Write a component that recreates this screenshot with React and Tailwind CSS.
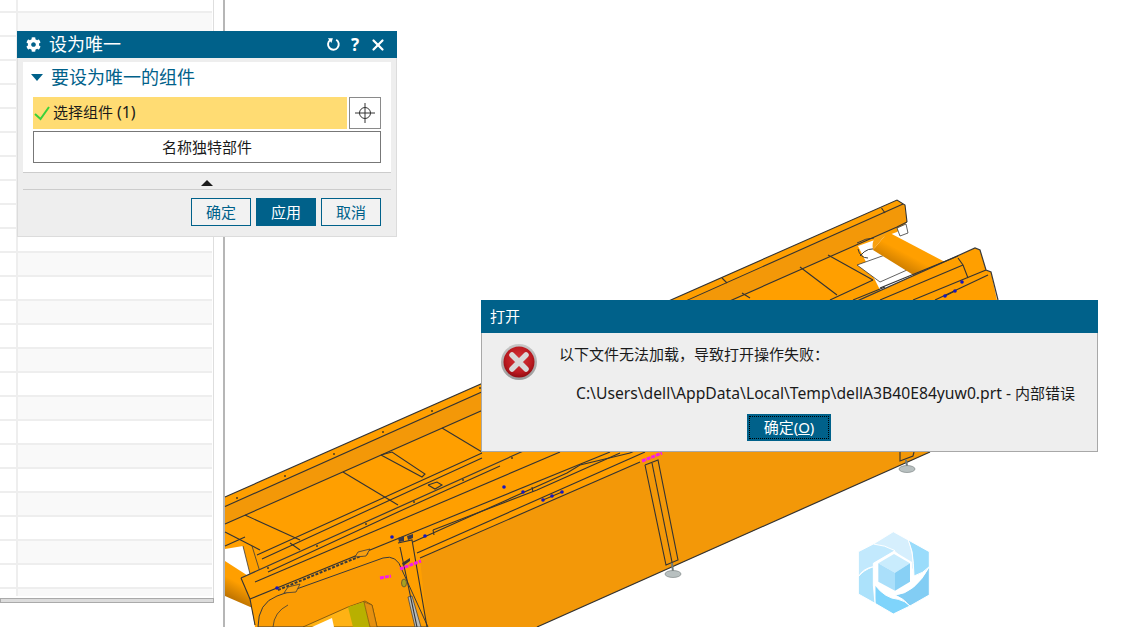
import React from 'react'
import { FaCog } from 'react-icons/fa'
import { X } from 'lucide-react'

const rows = Array.from({ length: 25 }, (_, i) => i)

// CAD model line work, in page coordinates
const modelLines = [
  // far rail
  '225,497 897,200 905,205 907,222',
  '225,506.5 903,204',
  '225,524 897,227 907,222',
  '881.5,208 885,213',
  '722,278 727,283',
  // deck panels
  '343,472 398,505',
  '442,428 482,452',
  '800,267 837,295',
  '828,255 873,280',
  '742,293 750,298',
  '245,515 300,540',
  '225,532 260,550',
  '225,546 245,537',
  '290,543 300,550',
  '257,555 383,498 482,453',
  '262,559 388,501 482,458',
  '873,280 830,300',
  '885,287 853,300',
  '268,572 398,512 500,466',
  // slot and tab
  '381,455 422,477 425,474 392,452 381,455',
  '428,485 437,482 442,485 435,489 428,485',
  // near rail
  '255,582 560,452',
  '250,599 610,452',
  '241,578 250,599',
  '250,599 255,625',
  '413,542 567,473 580,465 630,453',
  '433,530 537,490 620,453',
  '417,553 645,452',
  '420,558 640,462',
  '630,453 650,444',
  '880,300 963,265',
  '913,300 986,270',
  '935,300 988,275',
  '880,288 958,256',
  '958,258 963,265 968,278',
  '945,296 955,291',
  '543,500 562,492',
  // near strut
  '398,543 412,540 427,627',
  '400,547 417,627',
  '532,487 533,492',
  '433,530 434,535',
  // struts on the side panel
  '645,465 658,460 678,560 666,565 645,465',
  '652,463 672,562',
  '900,452 900,461 913,456 914,452',
]

const blueDots = [
  [504, 487], [523, 492], [543, 500], [552, 496], [562, 492],
  [425, 536], [392, 537], [277, 588], [962, 282], [945, 296], [955, 291],
]

const rivets = [
  [237, 498], [285, 476], [334, 454], [383, 432], [432, 411], [480, 388],
  [268, 568], [317, 546], [366, 524], [414, 502], [463, 480], [512, 458],
]

const pinkMarks = ['380,578 391,576', '400,569 421,561', '642,461 662,453']

const CadModel = () => (
  <svg className="absolute left-0 top-0" width="1141" height="627" viewBox="0 0 1141 627">
    <defs>
      <linearGradient id="farTube" gradientUnits="userSpaceOnUse" x1="893" y1="235" x2="877" y2="265">
        <stop offset="0.3" stopColor="#ff9f00" />
        <stop offset="1" stopColor="#b46c00" />
      </linearGradient>
      <linearGradient id="nearTube" gradientUnits="userSpaceOnUse" x1="245" y1="572" x2="228" y2="604">
        <stop offset="0.35" stopColor="#ff9f00" />
        <stop offset="1" stopColor="#a86400" />
      </linearGradient>
    </defs>

    {/* lower left tube */}
    <polygon points="225,561 262,585 262,612 225,596" fill="url(#nearTube)" />

    {/* deck */}
    <polygon points="225,497 897,200 905,205 907,222 897,232 858,246 885,300 260,570 250,574 243,546 225,549" fill="#ff9f00" />
    <polygon points="225,506.5 903,204 907,222 897,227 225,524" fill="#f39808" />
    <polygon points="857,265 885,255 907,270 880,282" fill="#ffffff" stroke="#3a3a3a" strokeWidth="0.8" />
    <polygon points="897,228 906,224 908,233 900,236" fill="#ffffff" stroke="#3a3a3a" strokeWidth="0.8" />
    <path d="M857 243 Q866 238 874 238 M858 249 Q860 258 868 258 M860 256 Q868 246 878 250" fill="none" stroke="#3a3a3a" strokeWidth="1" />
    <path d="M243 546 L250 574 M252 546 L260 572" fill="none" stroke="#3a3a3a" strokeWidth="0.8" />

    {/* far tube */}
    <polygon points="888,232 945,262 915,276 873,250" fill="url(#farTube)" />
    <path d="M888 232 Q870 234 873 250" fill="#f8a010" />

    {/* near rail and side panel */}
    <polygon points="241,578 975,248 980,250 986,270 991,272 998,305 930,452 537,627 427,627 255,627 250,599" fill="#ff9f00" />
    <polygon points="420,558 640,462 990,310 1000,400 930,452 537,627 427,627" fill="#f39808" />
    <polyline points="241,578 975,248 980,250 986,270 991,272 998,300" fill="none" stroke="#3a3a3a" strokeWidth="1.2" />
    <polyline points="537,627 930,452" fill="none" stroke="#333333" strokeWidth="1.2" />

    {/* end panel with its window */}
    <path d="M258 627 Q258 603 277 596 L383 558 Q397 554 402 570 L428 627 Z" fill="#fb9c04" stroke="#3a3a3a" strokeWidth="1" />
    <path d="M273 627 Q274 612 288 605" fill="none" stroke="#3a3a3a" strokeWidth="0.8" />
    <path d="M303 627 L348 607 L365 601 L372 605 L377 627 Z" fill="#ffb214" stroke="#6a4a10" strokeWidth="0.8" />
    <path d="M348 607 L364 602 L370 627 L353 627 Z" fill="#b8b000" />
    <path d="M364 602 L372 605 L377 627 L370 627 Z" fill="#e69010" stroke="#6a4a10" strokeWidth="0.6" />
    <path d="M312 627 L332 618 L334 627 Z" fill="#ffffff" />
    <polygon points="408,597 412,596 421,627 415,627" fill="#b8bcbc" stroke="#3a3a3a" strokeWidth="0.7" />

    {modelLines.map((pts) => (
      <polyline key={pts} points={pts} fill="none" stroke="#333333" strokeWidth="1.1" />
    ))}
    <polyline points="278,590 368,553" fill="none" stroke="#3a3a3a" strokeWidth="2" strokeDasharray="3 1.5" />
    <polygon points="288,587 300,584 296,592 284,593" fill="#f8a010" stroke="#3a3a3a" strokeWidth="0.8" />
    <polygon points="358,552 370,549 366,556 355,557" fill="#f8a010" stroke="#3a3a3a" strokeWidth="0.8" />
    <polygon points="398,538 404,536 404,541 399,542" fill="#3a3a4a" />
    <polygon points="407,536 413,534 413,538 408,540" fill="#3a3a4a" />
    <polygon points="402,563 410,558 410,561 403,566" fill="#3a3a3a" />
    <ellipse cx="404" cy="583" rx="2.5" ry="4" fill="#a8a020" stroke="#3a3a3a" strokeWidth="0.6" />

    {rivets.map(([cx, cy]) => (
      <circle key={`${cx}-${cy}`} cx={cx} cy={cy} r="1" fill="#4a3a20" />
    ))}
    {blueDots.map(([cx, cy]) => (
      <circle key={`${cx}-${cy}`} cx={cx} cy={cy} r="1.8" fill="#1616c0" />
    ))}
    {pinkMarks.map((pts) => (
      <polyline key={pts} points={pts} fill="none" stroke="#f51ee6" strokeWidth="3" strokeDasharray="4 1" />
    ))}

    {/* feet */}
    <line x1="672" y1="563" x2="673" y2="572" stroke="#6f7a7a" strokeWidth="2" />
    <ellipse cx="673" cy="574" rx="8" ry="3.5" fill="#b8c0c0" stroke="#707878" strokeWidth="0.6" />
    <line x1="906" y1="460" x2="907" y2="466" stroke="#6f7a7a" strokeWidth="2" />
    <ellipse cx="907" cy="469" rx="8" ry="3.5" fill="#b8c0c0" stroke="#707878" strokeWidth="0.6" />

    {/* watermark logo */}
    <g transform="translate(840 520) scale(0.3333)" stroke="#ffffff" strokeWidth="3">
      <path d="M160 35 L205 60 Q222 100 220 150 L190 118 L162 92 Q130 80 100 72 Z" fill="#d6effd" />
      <path d="M205 60 L268 95 L268 140 Q250 160 222 168 L220 130 Q220 95 205 60 Z" fill="#9adcfb" />
      <path d="M268 140 L268 225 L210 258 Q190 235 165 225 Q225 220 268 140 Z" fill="#82cdf4" />
      <path d="M210 258 L160 282 L105 250 L105 195 Q135 235 175 238 Q195 242 210 258 Z" fill="#7fd4fb" />
      <path d="M55 170 Q70 150 100 140 L100 195 L105 250 L55 222 Z" fill="#ace2fb" />
      <path d="M55 95 L100 72 Q135 75 165 92 L100 130 L100 140 Q70 145 55 170 Z" fill="#c2e9fd" />
      <polygon points="162,94 216,126 216,188 165,218 107,188 107,126" fill="#ffffff" strokeWidth="0" />
      <path d="M162 102 L210 130 L165 158 L115 130 Z" fill="#c9ecfd" strokeWidth="0" />
      <path d="M115 130 L165 158 L165 212 L115 185 Z" fill="#aadffa" strokeWidth="0" />
      <path d="M210 130 L210 185 L165 212 L165 158 Z" fill="#88d0f5" strokeWidth="0" />
    </g>
  </svg>
)

const ErrorIcon = () => (
  <svg width="38" height="38" viewBox="0 0 38 38" className="shrink-0">
    <defs>
      <radialGradient id="errRed" cx="50%" cy="42%" r="60%">
        <stop offset="0" stopColor="#d8353a" />
        <stop offset="0.7" stopColor="#ba1a20" />
        <stop offset="1" stopColor="#8e0a10" />
      </radialGradient>
      <linearGradient id="errRing" x1="0" y1="0" x2="0" y2="1">
        <stop offset="0" stopColor="#c8c8c8" />
        <stop offset="1" stopColor="#9a9a9a" />
      </linearGradient>
    </defs>
    <circle cx="19" cy="19" r="18" fill="url(#errRing)" />
    <circle cx="19" cy="19" r="15.5" fill="url(#errRed)" />
    <path d="M12 12 L26 26 M26 12 L12 26" stroke="#d9d9d9" strokeWidth="5.5" strokeLinecap="round" />
  </svg>
)

const DialogButton = ({ children, primary }) => (
  <button
    className={
      primary
        ? 'w-[60px] h-[28px] bg-[#00618a] text-white text-[15px]'
        : 'w-[60px] h-[28px] border border-[#00618a] text-[#00618a] text-[15px] bg-[#f2f2f2]'
    }
  >
    {children}
  </button>
)

const MakeUniqueDialog = () => (
  <div className="absolute left-[17px] top-[31px] w-[380px] h-[206px] bg-[#eeeeee] border border-[#dcdcdc] border-t-0 flex flex-col">
    <div className="h-[27px] -mx-px bg-[#00618a] text-white flex items-center pl-[9px] pr-[10px] shrink-0">
      <FaCog size={15} />
      <span className="ml-[8px] text-[18px] leading-none -translate-y-px">设为唯一</span>
      <div className="ml-auto flex items-center gap-[8px]">
        <svg width="15" height="15" viewBox="0 0 14 14" fill="none" stroke="#ffffff" strokeWidth="1.8">
          <path d="M4 2.8 A5 5 0 1 0 9.5 2.6" />
          <path d="M1.8 1.2 L6.4 1.2 L5 5.6 Z" fill="#ffffff" stroke="none" />
        </svg>
        <span className="w-[12px] text-center text-[17px] font-bold leading-none">?</span>
        <X size={18} strokeWidth={3} />
      </div>
    </div>
    <div className="mx-[5px] mt-1 h-[110px] bg-white px-[10px] shrink-0">
      <div className="h-[31px] flex items-center -ml-[2px]">
        <svg width="12" height="7" viewBox="0 0 12 7" className="mr-[8px]">
          <polygon points="0,0 12,0 6,7" fill="#00618a" />
        </svg>
        <span className="text-[18px] leading-none text-[#00618a] -translate-y-px">要设为唯一的组件</span>
      </div>
      <div className="mt-[4px] flex gap-[2px]">
        <div className="w-[314px] h-[32px] bg-[#ffdc73] flex items-center">
          <svg width="18" height="16" viewBox="0 0 18 16" fill="none" className="ml-px">
            <path d="M1 9 L6.5 14 L15 2" stroke="#3ad13a" strokeWidth="2" />
          </svg>
          <span className="ml-px text-[15px] text-[#1a1a1a] -translate-y-px">
            选择组件 <span className="text-[16px]">(1)</span>
          </span>
        </div>
        <button className="w-[32px] h-[32px] border border-[#8a8a8a] bg-white flex items-center justify-center">
          <svg width="20" height="20" viewBox="0 0 20 20" fill="none" stroke="#333333" strokeWidth="1">
            <circle cx="10" cy="10" r="5.5" />
            <path d="M0 10 H20 M10 0 V20" />
          </svg>
        </button>
      </div>
      <button className="mt-[2px] w-full h-[32px] border border-[#777777] bg-white text-[15px] text-[#1a1a1a]">
        名称独特部件
      </button>
    </div>
    <div className="mx-[5px] h-[18px] pt-[3px] border-y border-[#cccccc] flex items-center justify-center shrink-0">
      <svg width="12" height="6" viewBox="0 0 12 6">
        <polygon points="6,0 12,6 0,6" fill="#1a1a1a" />
      </svg>
    </div>
    <div className="mt-[8px] pr-[15px] flex justify-end gap-[5px]">
      <DialogButton>确定</DialogButton>
      <DialogButton primary>应用</DialogButton>
      <DialogButton>取消</DialogButton>
    </div>
  </div>
)

const OpenErrorDialog = () => (
  <div className="absolute left-[481px] top-[300px] w-[617px] h-[152px] bg-[#eeeeee] border-x border-b border-[#a8a8a8] flex flex-col">
    <div className="h-[33px] -mx-px bg-[#00618a] text-white text-[15px] flex items-center pl-[9px] shrink-0">打开</div>
    <div className="flex flex-1 pl-[18px]">
      <div className="pt-[10px]">
        <ErrorIcon />
      </div>
      <div className="flex-1 pl-[21px] pt-[10px] text-[15px] leading-[22px] text-[#1a1a1a]">
        <p>以下文件无法加载，导致打开操作失败：</p>
        <p className="mt-[17px] pl-[17px] whitespace-nowrap">
          <span className="text-[15.7px]">C:\Users\dell\AppData\Local\Temp\dellA3B40E84yuw0.prt - </span>内部错误
        </p>
      </div>
    </div>
    <button className="absolute left-[265px] top-[114px] w-[84px] h-[27px] bg-[#00618a] text-white text-[15px] p-[2px]">
      <span className="flex h-full items-center justify-center border border-dotted border-black">
        确定(<span className="underline">O</span>)
      </span>
    </button>
  </div>
)

const App = () => {
  return (
    <div className="relative w-[1141px] h-[627px] overflow-hidden bg-white flex font-['Noto_Sans','Noto_Sans_CJK_SC',sans-serif]">
      <aside className="w-[214px] h-full shrink-0 flex flex-col">
        <div className="h-[598px] border-r border-[#dedede]">
          <div className="h-[596px] w-[212px] overflow-hidden">
            <div className="h-[11px] flex">
              <div className="w-[18px] border-r-2 border-[#eeeeee]" />
            </div>
            {rows.map((i) => (
              <div
                key={i}
                className={
                  i % 2 === 0
                    ? 'h-[24px] flex border-t-2 border-[#eeeeee] bg-[#f9f9f9]'
                    : 'h-[24px] flex border-t-2 border-[#eeeeee] bg-white'
                }
              >
                <div className="w-[18px] h-full border-r-2 border-[#eeeeee] bg-white" />
              </div>
            ))}
          </div>
        </div>
        <div className="h-[5px] bg-[#dcdcdc] border border-[#aaaaaa]" />
      </aside>
      <div className="ml-[9px] h-full flex-1 border-l-2 border-[#b6b6b6]" />
      <CadModel />
      <MakeUniqueDialog />
      <OpenErrorDialog />
    </div>
  )
}

export default App
